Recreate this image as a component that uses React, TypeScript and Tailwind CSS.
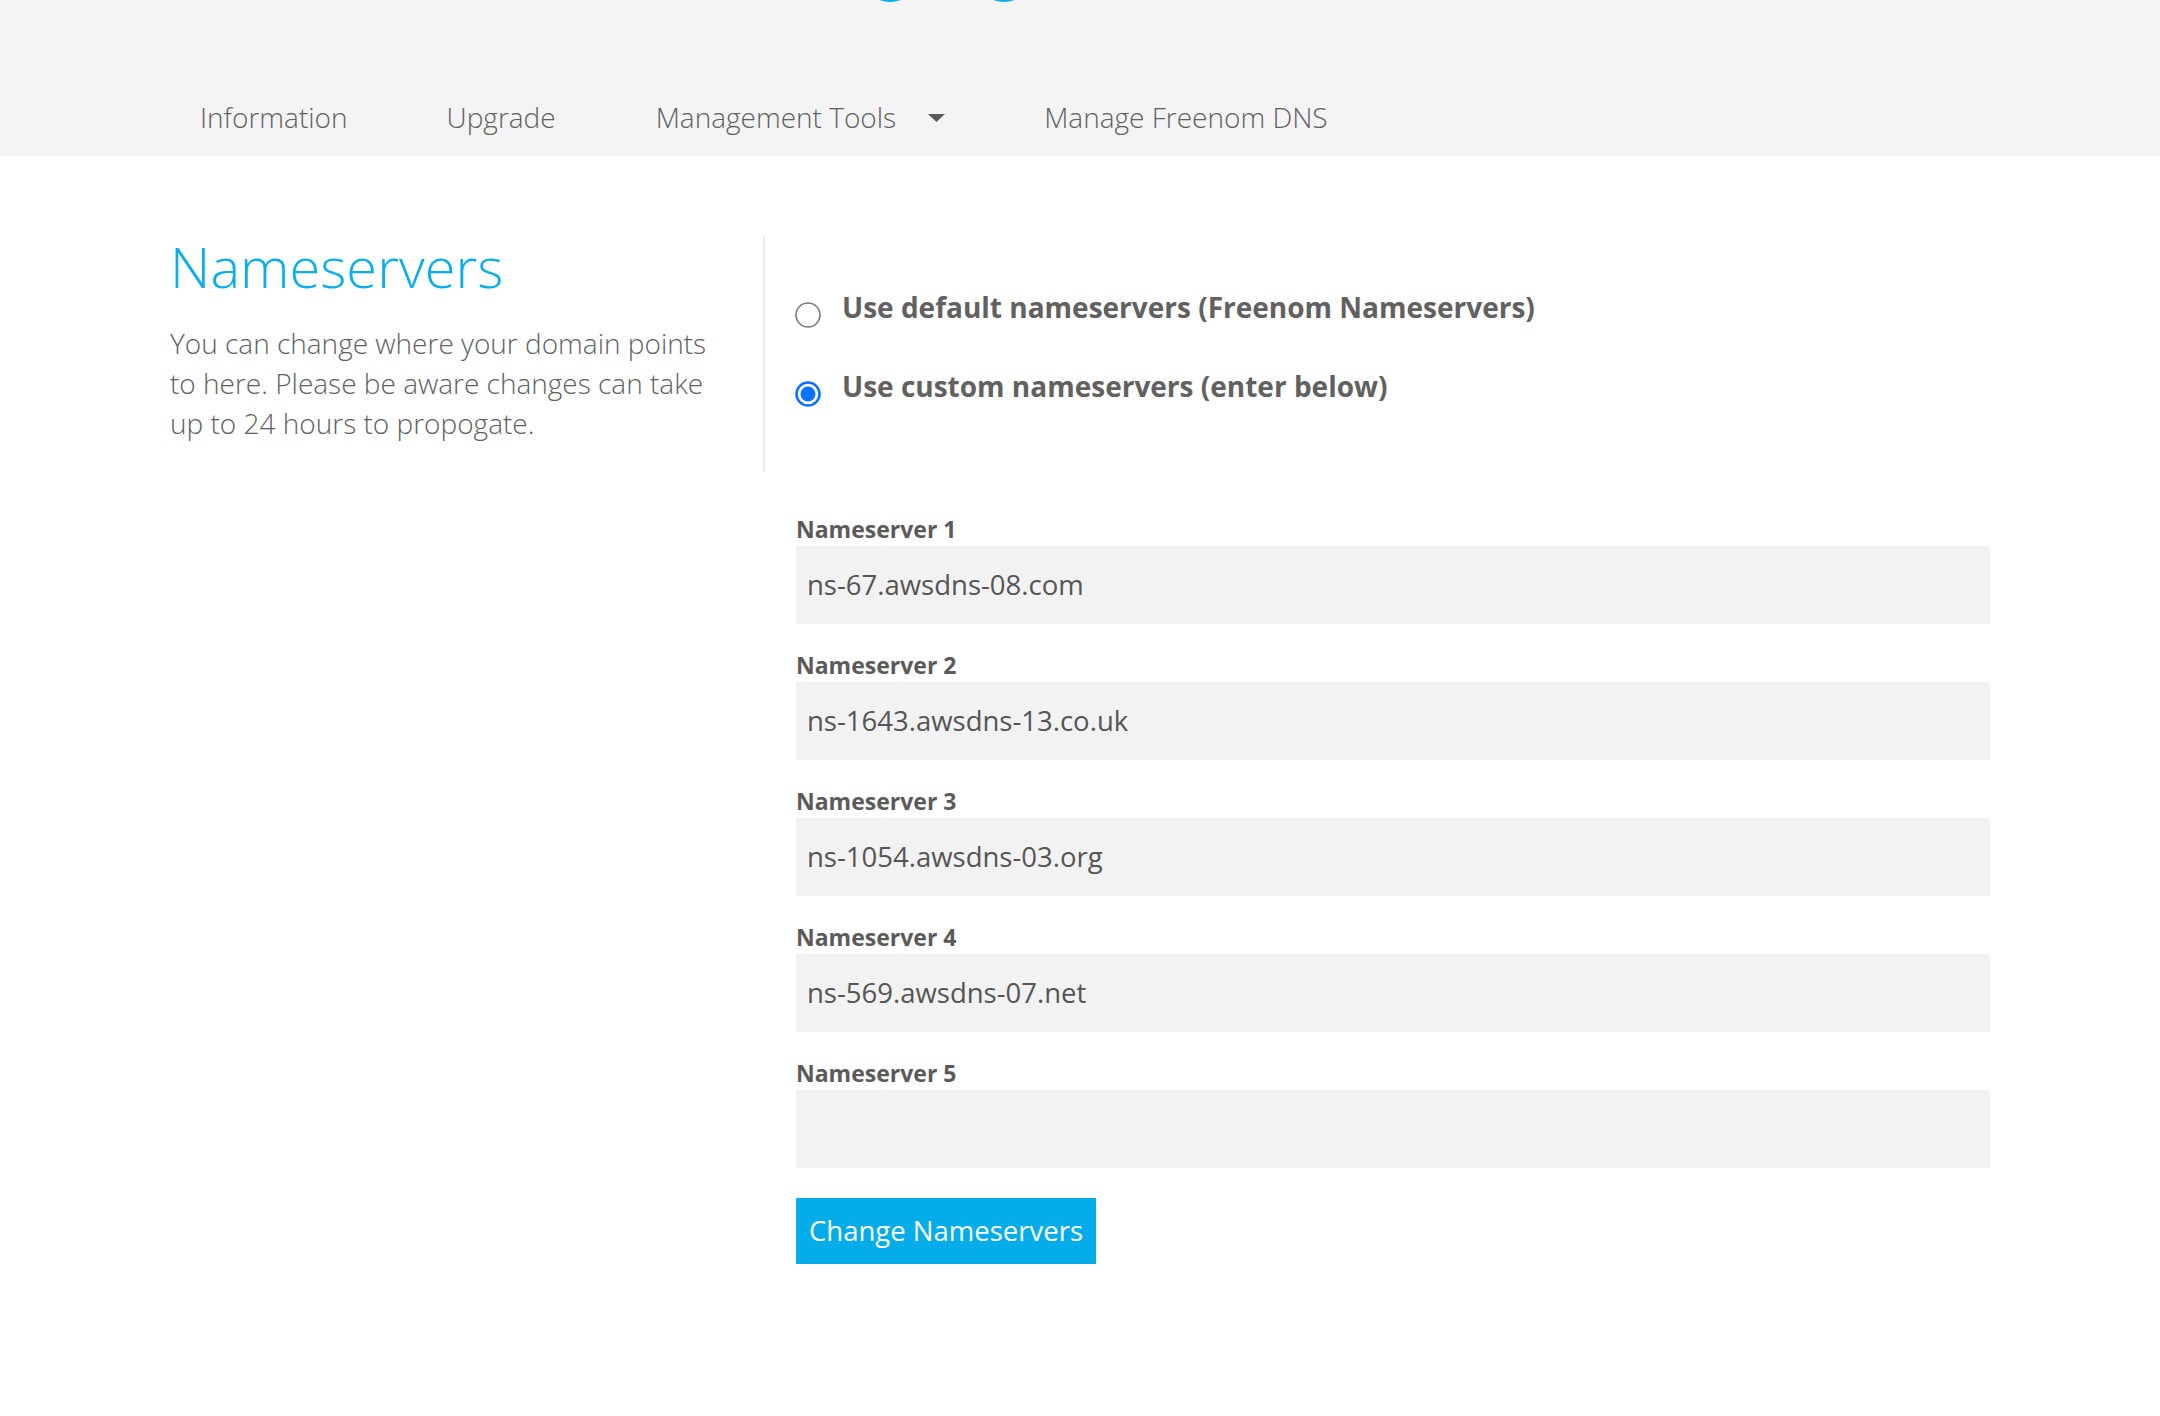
import React from "react";

const font = { fontFamily: '"Open Sans", "Liberation Sans", sans-serif' };

function Radio({ checked }: { checked: boolean }) {
  return (
    <svg width="26" height="26" viewBox="0 0 26 26" className="shrink-0 mt-[15px]">
      {checked ? (
        <>
          <circle cx="13" cy="13" r="11.5" fill="#ffffff" stroke="#0a72ff" strokeWidth="2.5" />
          <circle cx="13" cy="13" r="7.5" fill="#0a72ff" />
        </>
      ) : (
        <circle cx="13" cy="13" r="12" fill="#ffffff" stroke="#7a7a7a" strokeWidth="1.6" />
      )}
    </svg>
  );
}

const servers = [
  "ns-67.awsdns-08.com",
  "ns-1643.awsdns-13.co.uk",
  "ns-1054.awsdns-03.org",
  "ns-569.awsdns-07.net",
  "",
];

export default function App() {
  return (
    <div className="min-h-[1416px] w-[2160px] bg-white" style={font}>
      <header className="relative h-[156px] bg-[#f4f4f4]">
        <svg
          className="absolute left-[870px] top-0"
          width="160"
          height="6"
          viewBox="0 0 160 6"
        >
          <ellipse cx="20" cy="-3" rx="13" ry="5" fill="#08aeea" />
          <ellipse cx="134" cy="-3" rx="13" ry="5" fill="#08aeea" />
        </svg>
        <nav className="flex items-center pl-[200px] pt-[97px] text-[28px] font-light leading-[40px] text-[#606060]">
          <span>Information</span>
          <span className="ml-[99px]">Upgrade</span>
          <span className="ml-[100px] flex items-center">
            Management Tools
            <svg width="17" height="8" viewBox="0 0 17 8" className="ml-[32px] mt-[2px]">
              <path d="M0 0 L17 0 L8.5 8 Z" fill="#5a5a5a" />
            </svg>
          </span>
          <span className="ml-[99px]">Manage Freenom DNS</span>
        </nav>
      </header>

      <main className="pl-[170px] pt-[80px]">
        <div className="flex">
          <div className="w-[595px] shrink-0 border-r-2 border-[#ececec] h-[236px]">
            <h1 className="-mt-[3px] text-[56px] font-light leading-[67px] text-[#0aaeea]">
              Nameservers
            </h1>
            <p className="mt-[23px] text-[28px] font-light leading-[40px] text-[#616161]">
              You can change where your domain points
              <br />
              to here. Please be aware changes can take
              <br />
              up to 24 hours to propogate.
            </p>
          </div>
          <div className="pl-[30px] pt-[51px] flex flex-col gap-[38.5px]">
            <label className="flex h-[40px] items-start">
              <Radio checked={false} />
              <span className="ml-[21px] text-[28px] font-bold leading-[40px] text-[#616161]">
                Use default nameservers (Freenom Nameservers)
              </span>
            </label>
            <label className="flex h-[40px] items-start">
              <Radio checked={true} />
              <span className="ml-[21px] text-[28px] font-bold leading-[40px] text-[#616161]">
                Use custom nameservers (enter below)
              </span>
            </label>
          </div>
        </div>

        <div className="ml-[626px] w-[1194px] pt-[42px]">
          <div className="flex flex-col gap-[26.5px]">
            {servers.map((s, i) => (
              <div key={i}>
                <div className="mb-[1.5px] text-[23px] font-bold leading-[30px] text-[#5a5a5a]">
                  Nameserver {i + 1}
                </div>
                <div className="flex h-[78px] items-center bg-[#f2f2f2] pl-[11px] text-[27.5px] leading-[40px] text-[#555555]">
                  {s}
                </div>
              </div>
            ))}
          </div>
          <button className="mt-[30px] flex h-[66px] w-[300px] items-center justify-center bg-[#04ade9] text-[27.5px] leading-[40px] text-white">
            Change Nameservers
          </button>
        </div>
      </main>
    </div>
  );
}
